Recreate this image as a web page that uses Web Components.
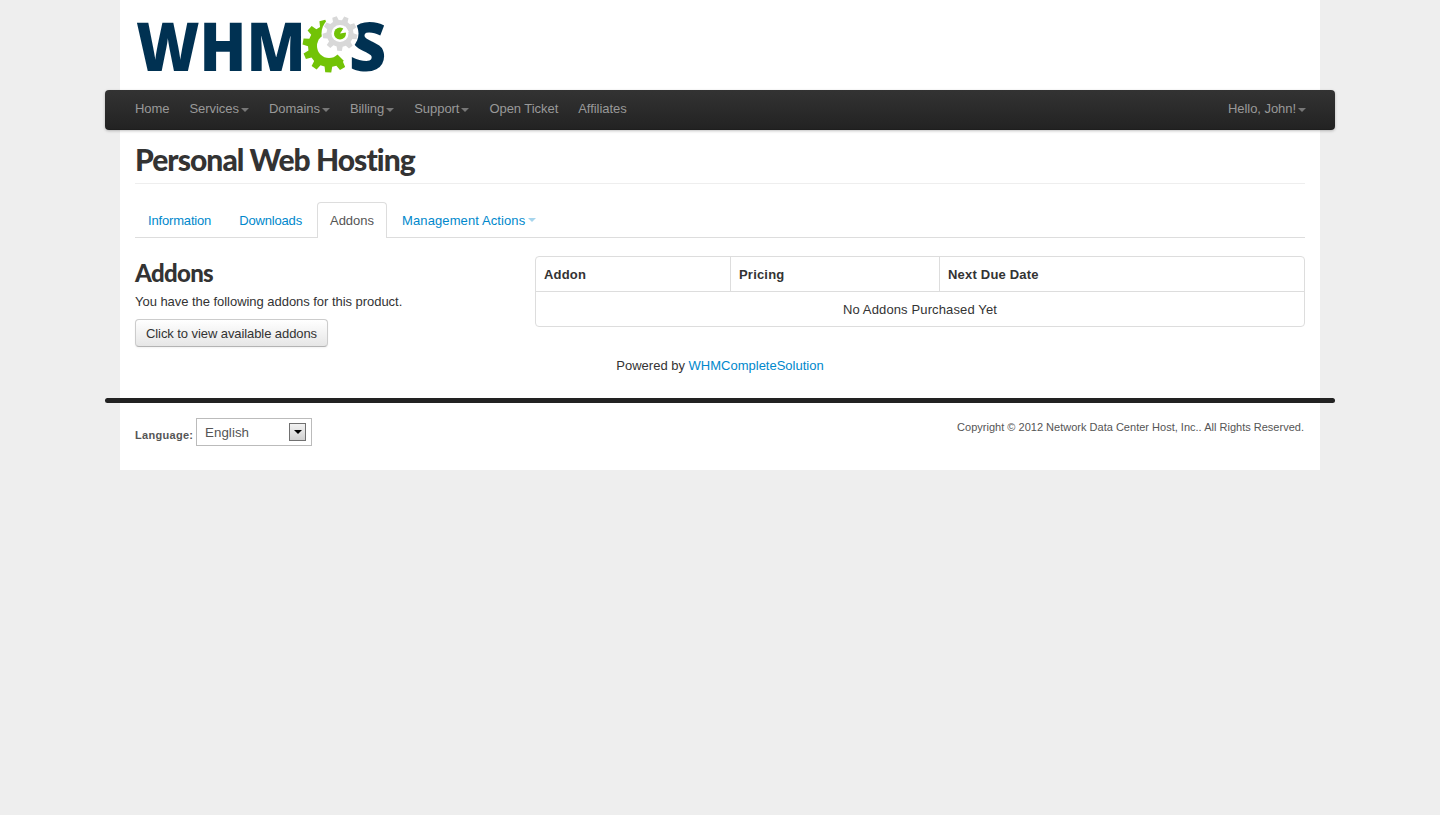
<!DOCTYPE html>
<html lang="en"><head><meta charset="utf-8"><title>Personal Web Hosting</title>
<style>
html,body{margin:0;padding:0;background:#eee;min-height:815px}
body{font:13px/20px "Liberation Sans",Arial,sans-serif;color:#333}
</style></head><body>
<site-shell>
  <site-logo slot="logo"></site-logo>
  <site-nav slot="nav">
    <nav-item>Home</nav-item><nav-item caret>Services</nav-item><nav-item caret>Domains</nav-item><nav-item caret>Billing</nav-item><nav-item caret>Support</nav-item><nav-item>Open Ticket</nav-item><nav-item>Affiliates</nav-item>
    <nav-item slot="right" caret>Hello, John!</nav-item>
  </site-nav>
  <page-title>Personal Web Hosting</page-title>
  <tab-bar>
    <tab-item>Information</tab-item><tab-item>Downloads</tab-item><tab-item active>Addons</tab-item><tab-item caret>Management Actions</tab-item>
  </tab-bar>
  <addons-panel></addons-panel>
  <site-footer slot="footer"></site-footer>
</site-shell>
<script>
function def(name, html, extra){
  customElements.define(name, class extends HTMLElement{
    constructor(){super();this.attachShadow({mode:'open'}).innerHTML=html;}
    connectedCallback(){extra&&extra.call(this);}
  });
}
def('site-shell',`<style>
:host{display:flex;flex-direction:column;width:1200px;height:470px;margin:0 auto;background:#fff}
.logo{height:90px;flex:none}
.nav{margin:0 -15px;flex:none}
.main{padding:0 15px;flex:none;height:268px;box-sizing:border-box}
</style><div class="logo"><slot name="logo"></slot></div><div class="nav"><slot name="nav"></slot></div><div class="main"><slot></slot></div><slot name="footer"></slot>`);

function gear(cx,cy,rOut,rIn,n,dutyTop,dutyBase,rot){
  let d='';const st=2*Math.PI/n;
  for(let i=0;i<n;i++){
    const a=i*st+(rot||0);
    const p=[[-dutyBase,rIn],[-dutyTop,rOut],[dutyTop,rOut],[dutyBase,rIn]];
    p.forEach((q,j)=>{const t=a+q[0]*st;d+=(i==0&&j==0?'M':'L')+(cx+q[1]*Math.cos(t)).toFixed(2)+' '+(cy+q[1]*Math.sin(t)).toFixed(2);});
  }
  return d+'Z';
}
def('site-logo',`<style>:host{display:block;height:90px}svg{display:block;overflow:visible}text{font-family:"Open Sans","Liberation Sans",sans-serif;font-weight:800;fill:#003152}</style>
<svg width="300" height="90" viewBox="120 0 300 90" role="img" aria-label="WHMCS">
<text transform="translate(136 71) scale(.9 1)" font-size="68">WHM</text>
<path id="g" fill="#72c306" d=""/>
<circle cx="329" cy="46" r="12" fill="#fff"/>
<path fill="#fff" d="M329 46L348 12L375 12L375 46L347 64Z"/>
<text transform="translate(349 71) scale(.95 1)" font-size="68">S</text>
<circle cx="340" cy="33.5" r="18.5" fill="#fff"/>
<path id="h" fill="#d8d8d8" d=""/>
<circle cx="340" cy="33.5" r="8.5" fill="#fff"/>
<circle cx="340" cy="33.5" r="6" fill="#72c306"/>
<path fill="#fff" d="M340 33.5L345 26L349 32Z"/>
</svg>`,function(){
  const s=this.shadowRoot;
  s.getElementById('g').setAttribute('d',gear(329,46,26.5,21,11,.2,.32,1.6));
  s.getElementById('h').setAttribute('d',gear(340,33.5,17.5,13.5,9,.19,.32,.2));
});
def('site-nav',`<style>
:host{display:flex;justify-content:space-between;height:40px;padding:0 19px 0 20px;box-sizing:border-box;border-radius:4px;background:linear-gradient(#333,#222);box-shadow:0 1px 3px rgba(0,0,0,.25),inset 0 -1px 0 rgba(0,0,0,.1)}
.l,.r{display:flex}
</style><div class="l"><slot></slot></div><div class="r"><slot name="right"></slot></div>`);
def('nav-item',`<style>
:host{display:flex;align-items:center;height:37px;padding:0 10px;color:#999;font-size:13px;letter-spacing:-.05px;white-space:nowrap}
.c{display:none;width:0;height:0;border:4px solid transparent;border-top-color:#999;border-bottom:0;margin-left:2px;margin-top:2px;opacity:.7}
:host([caret]) .c{display:block}
</style><slot></slot><span class="c"></span>`);
def('page-title',`<style>
:host{display:block;height:54px;box-sizing:border-box;border-bottom:1px solid #eee;font:900 30px/58px Lato,"Open Sans",sans-serif;letter-spacing:-.95px;color:#333;white-space:nowrap}
</style><slot></slot>`);
def('tab-bar',`<style>
:host{display:flex;margin-top:18px;height:36px;box-sizing:border-box;border-bottom:1px solid #ddd}
</style><slot></slot>`);
def('tab-item',`<style>
:host{display:flex;align-items:center;height:36px;box-sizing:border-box;padding:0 12px;margin-right:2px;color:#08c;border:1px solid transparent;border-bottom:0;border-radius:4px 4px 0 0;white-space:nowrap;letter-spacing:-.17px}
:host([active]){color:#555;background:#fff;border-color:#ddd;position:relative;letter-spacing:0}
:host([caret]){letter-spacing:.1px}
.c{display:none;width:0;height:0;border:4px solid transparent;border-top-color:#08c;border-bottom:0;margin-left:3px;margin-top:-1px;opacity:.35}
:host([caret]) .c{display:block}
</style><slot></slot><span class="c"></span>`);
def('addons-panel',`<style>
:host{display:block;margin-top:18px}
.row{display:flex;justify-content:space-between;align-items:flex-start}
.left{width:400px}
h3{margin:0;font:900 24px/33px Lato,"Open Sans",sans-serif;letter-spacing:-.67px;color:#333;height:35px}
p{margin:0 0 8px;height:20px;line-height:21px;color:#333;letter-spacing:-.04px}
.btn{display:inline-block;box-sizing:border-box;height:28px;line-height:27px;padding:0 10px;border:1px solid #ccc;border-bottom-color:#b3b3b3;border-radius:4px;background:linear-gradient(#fff,#e6e6e6);box-shadow:inset 0 1px 0 rgba(255,255,255,.2),0 1px 2px rgba(0,0,0,.05);color:#333;white-space:nowrap;letter-spacing:-.08px}
table{width:770px;box-sizing:border-box;border:1px solid #ddd;border-radius:4px;border-collapse:separate;border-spacing:0;table-layout:fixed}
th,td{padding:2px 8px 0;height:34px;box-sizing:border-box;line-height:20px;color:#333;letter-spacing:.13px}
th{text-align:left;font-weight:700;letter-spacing:.2px}
th+th{border-left:1px solid #ddd}
td{border-top:1px solid #ddd;text-align:center;height:35px}
.pw{text-align:center;margin-top:9px;height:20px;line-height:20px;color:#333}
a{color:#08c;text-decoration:none}
</style><div class="row"><div class="left"><h3>Addons</h3><p>You have the following addons for this product.</p><span class="btn">Click to view available addons</span></div>
<table><colgroup><col style="width:194px"><col style="width:209px"><col></colgroup><thead><tr><th>Addon</th><th>Pricing</th><th>Next Due Date</th></tr></thead><tbody><tr><td colspan="3">No Addons Purchased Yet</td></tr></tbody></table></div>
<div class="pw">Powered by <a href="#">WHMCompleteSolution</a></div>`);
def('site-footer',`<style>
:host{display:block;flex:1}
.bar{margin:0 -15px;height:5px;border-radius:3px;background:#222}
.row{display:flex;justify-content:space-between;padding:15px 16px 0 15px;align-items:flex-start}
.lang{display:flex;align-items:flex-end;height:28px;gap:3px}
b{font-size:11px;line-height:14px;color:#555;padding-bottom:4px;width:58px;white-space:nowrap;letter-spacing:.3px}
.sel{display:flex;align-items:center;justify-content:space-between;box-sizing:border-box;width:116px;height:28px;border:1px solid #bbb;padding:0 5px 0 8px;color:#555;background:#fff;font-size:13.33px;letter-spacing:.05px}
.t{padding-top:2px}
.ar{display:flex;align-items:center;justify-content:center;box-sizing:border-box;width:17px;height:18px;border:1px solid #707070;background:linear-gradient(#f2f2f2,#d0d0d0)}
.ar i{display:block;width:0;height:0;border:4px solid transparent;border-top-color:#000;border-bottom:0}
.cp{font-size:11px;line-height:18px;color:#555;white-space:nowrap;letter-spacing:.01px}
</style><div class="bar"></div><div class="row"><div class="lang"><b>Language:</b><span class="sel"><span class="t">English</span><span class="ar"><i></i></span></span></div><div class="cp">Copyright © 2012 Network Data Center Host, Inc.. All Rights Reserved.</div></div>`);
</script>
</body></html>
